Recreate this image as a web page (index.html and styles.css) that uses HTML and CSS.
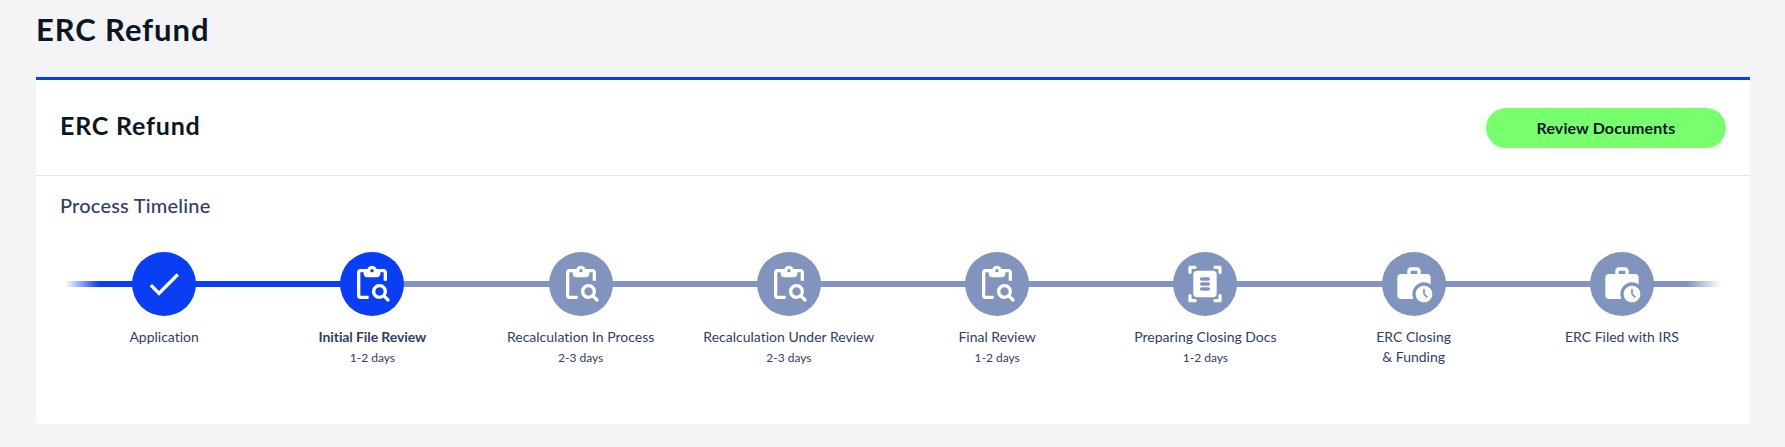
FILE: index.html
```html
<!DOCTYPE html>
<html lang="en">
<head>
<meta charset="utf-8">
<title>ERC Refund</title>
<link rel="stylesheet" href="styles.css">
</head>
<body>
<svg class="sprite" aria-hidden="true">
  <symbol id="check" viewBox="0 0 24 24"><path d="M9 16.17L4.83 12l-1.42 1.41L9 19 21 7l-1.41-1.41z"/></symbol>
  <symbol id="search-doc" viewBox="0 0 24 24"><path d="M5 5h2v1c0 1.1.9 2 2 2h6c1.1 0 2-.9 2-2V5h2v5h2V5c0-1.1-.9-2-2-2h-4.18C14.4 1.84 13.3 1 12 1S9.6 1.84 9.18 3H5c-1.1 0-2 .9-2 2v14c0 1.1.9 2 2 2h5v-2H5V5zm7-2c.55 0 1 .45 1 1s-.45 1-1 1-1-.45-1-1 .45-1 1-1z"/><path d="M20.3 18.9c.4-.7.7-1.5.7-2.4 0-2.5-2-4.5-4.5-4.5S12 14 12 16.5s2 4.5 4.5 4.5c.9 0 1.7-.3 2.4-.7l2 2c.39.39 1.01.39 1.4 0s.39-1.01 0-1.4l-2-2zm-3.8.1c-1.4 0-2.5-1.1-2.5-2.5s1.1-2.5 2.5-2.5 2.5 1.1 2.5 2.5-1.1 2.5-2.5 2.5z"/></symbol>
  <symbol id="scanner" viewBox="0 0 24 24"><path d="M7 2c0 .55-.45 1-1 1H4v2c0 .55-.45 1-1 1s-1-.45-1-1V2c0-.55.45-1 1-1h3c.55 0 1 .45 1 1zM21 6c.55 0 1-.45 1-1V2c0-.55-.45-1-1-1h-3c-.55 0-1 .45-1 1s.45 1 1 1h2v2c0 .55.45 1 1 1zM7 22c0-.55-.45-1-1-1H4v-2c0-.55-.45-1-1-1s-1 .45-1 1v3c0 .55.45 1 1 1h3c.55 0 1-.45 1-1zM21 18c-.55 0-1 .45-1 1v2h-2c-.55 0-1 .45-1 1s.45 1 1 1h3c.55 0 1-.45 1-1v-3c0-.55-.45-1-1-1zM19 18c0 1.1-.9 2-2 2H7c-1.1 0-2-.9-2-2V6c0-1.1.9-2 2-2h10c1.1 0 2 .9 2 2v12zM14 8h-4c-.55 0-1 .45-1 1s.45 1 1 1h4c.55 0 1-.45 1-1s-.45-1-1-1zm0 3h-4c-.55 0-1 .45-1 1s.45 1 1 1h4c.55 0 1-.45 1-1s-.45-1-1-1zm0 3h-4c-.55 0-1 .45-1 1s.45 1 1 1h4c.55 0 1-.45 1-1s-.45-1-1-1z" fill-rule="evenodd"/></symbol>
  <symbol id="work" viewBox="0 0 24 24"><path fill-rule="evenodd" d="M18 11c1.49 0 2.87.47 4 1.26V8c0-1.11-.89-2-2-2h-4V4c0-1.11-.89-2-2-2h-4c-1.11 0-2 .89-2 2v2H4c-1.11 0-2 .89-2 2v11c0 1.11.89 2 2 2h7.68A7 7 0 0 1 18 11zM10 4h4v2h-4V4z"/><path fill-rule="evenodd" d="M18 13c-2.76 0-5 2.24-5 5s2.24 5 5 5 5-2.24 5-5-2.24-5-5-5zm1.65 7.35L17.5 18.2V15h1v2.79l1.85 1.85-.7.71z"/></symbol>
</svg>
<main class="page">
  <h1 class="page-title">ERC Refund</h1>
  <section class="card">
    <header class="card-header">
      <h2 class="card-title">ERC Refund</h2>
      <button class="button" type="button">Review Documents</button>
    </header>
    <div class="card-body">
      <h3 class="section-title">Process Timeline</h3>
      <ol class="timeline">
        <li class="step done"><span class="dot"><svg class="icon"><use href="#check"/></svg></span><span class="label">Application</span></li>
        <li class="step current"><span class="dot"><svg class="icon"><use href="#search-doc"/></svg></span><span class="label">Initial File Review</span><span class="time">1-2 days</span></li>
        <li class="step"><span class="dot"><svg class="icon"><use href="#search-doc"/></svg></span><span class="label">Recalculation In Process</span><span class="time">2-3 days</span></li>
        <li class="step"><span class="dot"><svg class="icon"><use href="#search-doc"/></svg></span><span class="label">Recalculation Under Review</span><span class="time">2-3 days</span></li>
        <li class="step"><span class="dot"><svg class="icon"><use href="#search-doc"/></svg></span><span class="label">Final Review</span><span class="time">1-2 days</span></li>
        <li class="step"><span class="dot"><svg class="icon"><use href="#scanner"/></svg></span><span class="label">Preparing Closing Docs</span><span class="time">1-2 days</span></li>
        <li class="step"><span class="dot"><svg class="icon"><use href="#work"/></svg></span><span class="label">ERC Closing<br>&amp; Funding</span></li>
        <li class="step"><span class="dot"><svg class="icon"><use href="#work"/></svg></span><span class="label">ERC Filed with IRS</span></li>
      </ol>
    </div>
  </section>
</main>
</body>
</html>
```
FILE: styles.css
```css
* { box-sizing: border-box; margin: 0; padding: 0; }
body {
  background: #f4f4f7;
  color: #2f3e63;
  font-family: "Proxima Nova", Lato, "Open Sans", sans-serif;
  font-variant-ligatures: none;
}
.sprite { display: none; }
.page { padding: 9px 35px 23px 36px; }
.page-title {
  height: 68px;
  font-size: 31px;
  line-height: 40px;
  font-weight: 700;
  letter-spacing: 0.9px;
  color: #0a1622;
}
.card {
  height: 347px;
  background: #fff;
  border-top: 3px solid #0a3ef5;
  border-radius: 0 0 4px 4px;
}
.card-header {
  display: flex;
  align-items: center;
  justify-content: space-between;
  height: 96px;
  padding: 0 24px;
  border-bottom: 1px solid #e0e4ee;
}
.card-title {
  padding-bottom: 5px;
  font-size: 25px;
  line-height: 32px;
  font-weight: 700;
  letter-spacing: 0.8px;
  color: #0a1622;
}
.button {
  width: 240px;
  height: 40px;
  border: 0;
  border-radius: 20px;
  background: #77ff6e;
  color: #0a1622;
  font: 700 16px/39px "Proxima Nova", Lato, sans-serif;
  letter-spacing: 0.1px;
}
.card-body { padding: 16px 24px 0; }
.section-title { font-size: 20px; line-height: 26px; font-weight: 500; letter-spacing: 0.2px; }
.timeline {
  display: flex;
  margin-top: 34px;
  list-style: none;
  background: linear-gradient(90deg, rgba(10, 62, 245, 0) 5px, #0a3ef5 39px, #0a3ef5 312px, #8094be 312px, #8094be calc(100% - 39px), rgba(128, 148, 190, 0) calc(100% - 5px)) 0 29px / 100% 6px no-repeat;
}
.step {
  flex: 1 1 0;
  min-width: 0;
  display: flex;
  flex-direction: column;
  align-items: center;
  text-align: center;
}
.dot {
  display: grid;
  place-items: center;
  width: 64px;
  height: 64px;
  margin-bottom: 11px;
  border-radius: 50%;
  background: #8094be;
}
.done .dot, .current .dot { background: #0a3ef5; }
.icon { width: 40px; height: 40px; fill: #fff; }
.label { font-size: 14px; line-height: 20px; white-space: nowrap; }
.current .label { font-weight: 700; letter-spacing: -0.1px; }
.time { font-size: 12px; line-height: 21px; }
```
